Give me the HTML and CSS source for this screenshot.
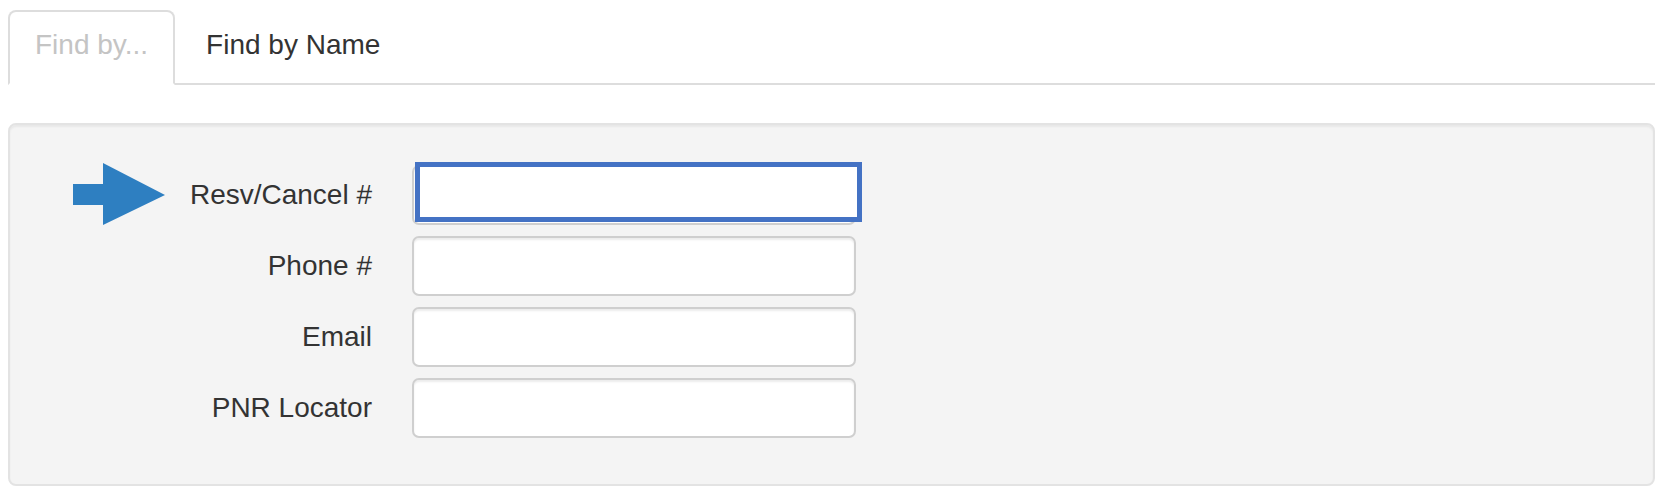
FILE: index.html
```html
<!DOCTYPE html>
<html>
<head>
<meta charset="utf-8">
<link rel="stylesheet" href="styles.css">
</head>
<body>
<ul class="tabs">
  <li class="tab active"><a>Find by...</a></li>
  <li class="tab"><a>Find by Name</a></li>
</ul>
<div class="well">
  <svg class="arrow" width="92" height="62" viewBox="0 0 92 62"><polygon points="0,21 30,21 30,0 92,32 30,62 30,42 0,42" fill="#2e7fc1"/></svg>
  <div class="row">
    <label class="lbl">Resv/Cancel #</label>
    <div class="field"><input class="inp" type="text"><span class="focus-box"></span></div>
  </div>
  <div class="row">
    <label class="lbl">Phone #</label>
    <div class="field"><input class="inp" type="text"></div>
  </div>
  <div class="row">
    <label class="lbl">Email</label>
    <div class="field"><input class="inp" type="text"></div>
  </div>
  <div class="row">
    <label class="lbl">PNR Locator</label>
    <div class="field"><input class="inp" type="text"></div>
  </div>
</div>
</body>
</html>
```
FILE: styles.css
```css
html, body { background: #fff; }
body {
  margin: 0 10px 0 8px;
  font-family: "Liberation Sans", Arial, sans-serif;
  font-size: 28px;
  color: #333;
  overflow: hidden;
}
.tabs {
  list-style: none;
  margin: 10px 0 0 0;
  padding: 0;
  display: flex;
  border-bottom: 2px solid #ddd;
}
.tab {
  margin-bottom: -2px;
  margin-right: 4px;
}
.tab a {
  display: block;
  padding: 13px 25px 18px;
  line-height: 40px;
  border: 2px solid transparent;
  border-radius: 8px 8px 0 0;
  color: #333;
}
.tab.active a {
  color: #c4c4c4;
  background: #fff;
  border-color: #ddd;
  border-bottom-color: transparent;
}
.well {
  position: relative;
  margin-top: 38px;
  background: #f4f4f4;
  border: 2px solid #e3e3e3;
  border-radius: 8px;
  box-shadow: inset 0 2px 2px rgba(0,0,0,0.05);
  padding: 40px 0 46px;
}
.arrow {
  position: absolute;
  left: 63px;
  top: 38px;
}
.row {
  display: flex;
  align-items: center;
  margin-bottom: 11px;
}
.row:last-child { margin-bottom: 0; }
.lbl {
  width: 362px;
  text-align: right;
  padding-right: 40px;
  box-sizing: content-box;
  line-height: 40px;
}
.field {
  position: relative;
  width: 444px;
  height: 60px;
}
.inp {
  display: block;
  box-sizing: border-box;
  width: 444px;
  height: 60px;
  margin: 0;
  border: 2px solid #cfcfcf;
  border-radius: 7px;
  background: #fff;
  box-shadow: inset 0 2px 2px rgba(0,0,0,0.08);
  outline: none;
}
.focus-box {
  position: absolute;
  left: 3px;
  top: -3px;
  width: 447px;
  height: 60px;
  box-sizing: border-box;
  border: 5px solid #4472c4;
  background: #fff;
}
```
